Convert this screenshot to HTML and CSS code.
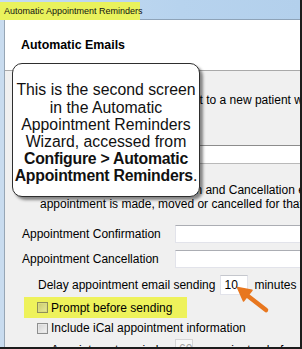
FILE: index.html
```html
<!DOCTYPE html>
<html>
<head>
<meta charset="utf-8">
<link rel="stylesheet" href="styles.css">
</head>
<body>
<div class="window">
  <div class="titlebar"><span class="title">Automatic Appointment Reminders</span></div>
  <div class="frame">
    <div class="frame-edge"></div>
    <div class="client">
      <div class="header"><h1 class="heading">Automatic Emails</h1></div>
      <div class="panel">
        <p class="intro">A Welcome email can be sent to a new patient when they are added</p>
        <div class="wide-input"></div>
        <p class="desc">The Appointment Confirmation and Cancellation emails are sent when an<br>appointment is made, moved or cancelled for that patient.</p>
        <div class="field-row first"><span class="label">Appointment Confirmation</span><span class="textbox"></span></div>
        <div class="field-row"><span class="label">Appointment Cancellation</span><span class="textbox"></span></div>
        <div class="delay-row"><span>Delay appointment email sending</span><span class="small-box">10</span><span>minutes</span></div>
        <div class="check-row highlight"><span class="checkbox"></span><span>Prompt before sending</span></div>
        <div class="check-row"><span class="checkbox"></span><span>Include iCal appointment information</span></div>
        <div class="reminder-row"><span class="rem-label">Appointment reminder</span><span class="small-box disabled">60</span><span class="rem-after">minutes before appointment</span></div>
      </div>
    </div>
  </div>
  <div class="callout">
    <p class="callout-text">This is the second screen<br>in the Automatic<br>Appointment Reminders<br>Wizard, accessed from<br><b class="strong">Configure &gt; Automatic</b><br><b class="strong">Appointment Reminders</b>.</p>
  </div>
  <svg class="arrow" width="302" height="349" viewBox="0 0 302 349">
    <line x1="266" y1="310" x2="246" y2="294.5" stroke="#e8771f" stroke-width="4.5" stroke-linecap="round"/>
    <polygon points="237.5,287.5 252,290.2 243.5,301" fill="#e8771f" stroke="#e8771f" stroke-width="1.5" stroke-linejoin="round"/>
  </svg>
</div>
</body>
</html>
```
FILE: styles.css
```css
* { box-sizing: border-box; }
html, body { margin: 0; padding: 0; }
body {
  width: 302px;
  height: 349px;
  overflow: hidden;
  font-family: "Liberation Sans", Arial, sans-serif;
  color: #000;
  background: #fff;
}
.window {
  position: relative;
  width: 302px;
  height: 349px;
  overflow: hidden;
  border-right: 2px solid #1c1c1c;
  border-bottom: 2px solid #1c1c1c;
  display: flex;
  flex-direction: column;
}
.titlebar {
  height: 20px;
  flex: none;
  background: linear-gradient(90deg, #c6dcf1 0%, #b7d3ee 60%, #b3d0ec 100%);
  border-bottom: 1px solid #8ea3b8;
}
.title {
  display: inline-block;
  height: 19px;
  width: 140px;
  background: #e9f25c;
  font-size: 9px;
  line-height: 19px;
  padding-left: 4px;
  white-space: nowrap;
  color: #111;
}
.frame {
  flex: 1;
  display: flex;
  min-height: 0;
}
.frame-edge {
  width: 5px;
  flex: none;
  background: #c9dcef;
  border-right: 1px solid #97a6b5;
}
.client {
  flex: 1;
  display: flex;
  flex-direction: column;
  min-width: 0;
  overflow: hidden;
}
.header {
  height: 51px;
  flex: none;
  background: #fff;
  border-bottom: 1px solid #a9a9a9;
  display: flex;
  align-items: center;
  padding-left: 16px;
}
.heading {
  margin: 0;
  font-size: 12.4px;
  font-weight: bold;
}
.panel {
  flex: 1;
  background: #f0f0f0;
  font-size: 12px;
  white-space: nowrap;
}
.intro {
  margin: 22px 0 0 40px;
  line-height: 14px;
}
.wide-input {
  margin: 38px 0 0 17px;
  height: 19px;
  background: #fff;
  border: 1px solid #b9b9b9;
  border-top-color: #8c8c8c;
  border-right: none;
}
.desc {
  margin: 19px 0 0 35px;
  line-height: 14px;
}
.field-row {
  display: flex;
  align-items: center;
  margin-top: 7px;
  padding-left: 17px;
  height: 18px;
}
.field-row.first { margin-top: 14px; }
.label { width: 153px; flex: none; }
.textbox {
  flex: 1;
  height: 18px;
  background: #fff;
  border: 1px solid #e2e3ea;
  border-top-color: #abadb3;
  border-right: none;
}
.delay-row {
  display: flex;
  align-items: center;
  height: 20px;
  margin-top: 7px;
  padding-left: 33px;
}
.small-box {
  display: inline-block;
  height: 20px;
  line-height: 18px;
  background: #fff;
  border: 1px solid #e2e3ea;
  border-top-color: #c5c7cd;
  font-size: 12px;
  padding-left: 3px;
}
.delay-row .small-box { width: 28px; margin: 0 6px 0 5px; }
.check-row {
  display: flex;
  align-items: center;
  gap: 3px;
  height: 14px;
  margin-top: 3px;
  margin-left: 19px;
  padding-left: 13px;
  width: 163px;
}
.check-row.highlight {
  height: 21px;
  margin-top: 2px;
  background: #eef25b;
}
.checkbox {
  width: 11px;
  height: 11px;
  flex: none;
  border: 1px solid #8e8f8f;
  background: linear-gradient(135deg, #d2d2d2, #f4f4f4);
  box-shadow: inset 0 0 0 1px #e6e6e6;
}
.highlight .checkbox {
  background: linear-gradient(135deg, #c9cb6a, #e7ea9a);
  box-shadow: inset 0 0 0 1px #dadc80;
  border-color: #8f8f5a;
}
.reminder-row {
  display: flex;
  align-items: flex-start;
  margin-top: 4px;
  height: 20px;
}
.rem-label { width: 170px; flex: none; padding-left: 46px; line-height: 20px; margin-top: 1px; }
.reminder-row .small-box { width: 43px; margin-right: 28px; }
.small-box.disabled { color: #a3a3a3; background: #f7f7f7; border-color: #d5d5d5; }
.rem-after { line-height: 20px; margin-top: 1px; }
.callout {
  position: absolute;
  left: 12px;
  top: 63px;
  width: 188px;
  height: 134px;
  padding-top: 6px;
  background: #fff;
  border: 1.5px solid #2e2e2e;
  border-radius: 10px;
  box-shadow: 3px 3px 3px rgba(0,0,0,0.45);
  display: flex;
  align-items: center;
  justify-content: center;
}
.callout-text {
  margin: 0;
  text-align: center;
  font-size: 15.8px;
  line-height: 17.2px;
  color: #111;
  white-space: nowrap;
  font-weight: normal;
}
.strong { font-weight: bold; letter-spacing: -0.25px; }
.arrow {
  position: absolute;
  left: 0;
  top: 0;
  pointer-events: none;
}
```
